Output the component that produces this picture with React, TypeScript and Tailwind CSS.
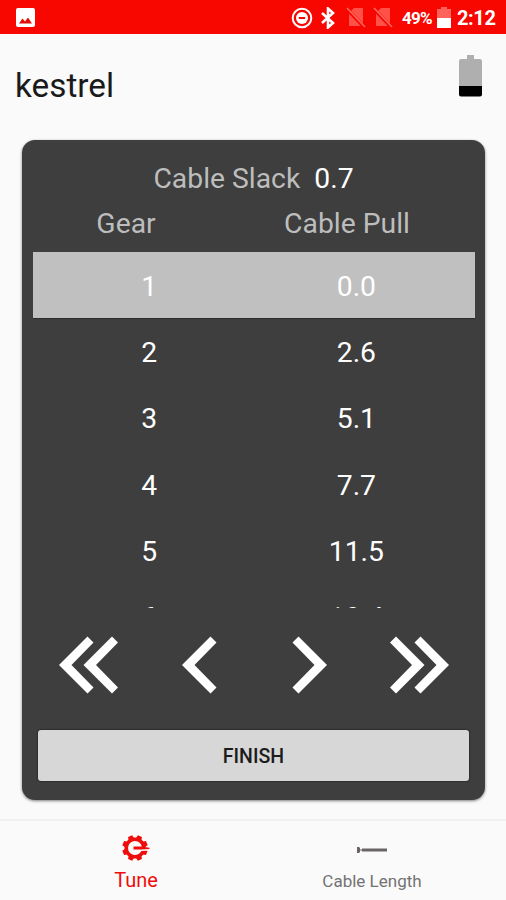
import { useState } from "react";

interface GearRow {
  gear: number;
  pull: string;
}

const ROWS: GearRow[] = [
  { gear: 1, pull: "0.0" },
  { gear: 2, pull: "2.6" },
  { gear: 3, pull: "5.1" },
  { gear: 4, pull: "7.7" },
  { gear: 5, pull: "11.5" },
  { gear: 6, pull: "18.4" },
];

// Teeth of the tune icon, in degrees
const TEETH = [22.5, 67.5, 112.5, 157.5, 202.5, 247.5, 292.5, 337.5];

function NoSimIcon() {
  return (
    <svg className="h-[22px] w-5" viewBox="0 0 20 22">
      <path d="M8 1h9v18H3V6z" fill="#ff5148" />
      <path d="M0 1l19 20" stroke="#f80600" strokeWidth="3.5" />
      <path d="M1 1l18 19" stroke="#ff6a60" strokeWidth="1.5" />
    </svg>
  );
}

function StatusBar() {
  return (
    <div className="flex h-[34px] items-center bg-[#f80600] pt-[2px] pl-4 text-white">
      <svg className="mb-[2px] h-[19px] w-[19px]" viewBox="0 0 19 19">
        <rect width="19" height="19" rx="2" fill="#fff" />
        <path d="M3 15.500l3.500-5 2.500 3L12 9.500l4 6z" fill="#e30b05" />
      </svg>

      <svg className="ml-[256px] h-[22px] w-[22px]" viewBox="0 0 22 22">
        <circle cx="11" cy="11" r="9.3" fill="none" stroke="#fff" strokeWidth="2" />
        <circle cx="11" cy="11" r="6" fill="#fff" />
        <path d="M7.8 11h6.4" stroke="#f80600" strokeWidth="2" />
      </svg>
      <svg className="ml-[7px] h-[22px] w-4" viewBox="0 0 16 22">
        <path
          d="M2 6l11 10-5 4.500v-19L13 6 2 16"
          fill="none"
          stroke="#fff"
          strokeWidth="2.600"
        />
      </svg>
      <div className="ml-[10px] flex gap-[7px]">
        <NoSimIcon />
        <NoSimIcon />
      </div>
      <span className="ml-[9px] w-[33px] text-[17px] leading-none font-bold tracking-[-0.7px] whitespace-nowrap">
        49%
      </span>
      <svg className="ml-[2px] h-[22px] w-[14px]" viewBox="0 0 14 22">
        <path d="M4 0h6v2h4v9H0V2h4z" fill="#ff625a" />
        <path d="M0 11h14v10H0z" fill="#fff" />
      </svg>
      <span className="ml-[6px] text-[20px] leading-none font-bold tracking-[-0.4px]">
        2:12
      </span>
    </div>
  );
}

interface ChevronProps {
  label: string;
  double?: boolean;
  flip?: boolean;
}

function ChevronButton({ label, double, flip }: ChevronProps) {
  const w = double ? 59 : 35;
  return (
    <button aria-label={label} className={flip ? "-scale-x-100" : ""}>
      <svg width={w} height={58} viewBox={`0 0 ${w} 58`} fill="#fff">
        <path d="M0 29L28.500.5l6 6L12.500 29l22 22.500-6 6z" />
        {double && <path d="M24.500 29L53 .5l6 6L37 29l22 22.500-6 6z" />}
      </svg>
    </button>
  );
}

function TuneIcon() {
  return (
    <svg className="h-[26px] w-[28px]" viewBox="-13 -13 28 26">
      {TEETH.map((deg) => (
        <path
          key={deg}
          d="M-3.200-8.500L-2.200-12.800h4.400L3.200-8.500z"
          transform={`rotate(${deg})`}
          fill="#f00c0c"
        />
      ))}
      <circle r="8.800" fill="none" stroke="#f00c0c" strokeWidth="3.600" />
      <path d="M5 1.200L13 .8v2L6 3z" fill="#fafafa" />
      <path d="M-1.500-1.500H6L14.500-.3v1.200L6 1.500h-7.500z" fill="#f00c0c" />
    </svg>
  );
}

export default function App() {
  const [selected, setSelected] = useState(1);

  return (
    <div className="flex h-[900px] w-[506px] flex-col overflow-hidden bg-[#fafafa] font-[Roboto,sans-serif]">
      <StatusBar />

      <header className="flex h-[106px] shrink-0 items-start justify-between pr-6 pl-[15px]">
        <h1 className="mt-8 text-[33.300px] leading-[40px] text-[#1a1a1a]">kestrel</h1>
        <svg className="mt-[21px] h-[42px] w-[23px]" viewBox="0 0 23 42">
          <path d="M8 0h7v4h6a2 2 0 0 1 2 2v26H0V6a2 2 0 0 1 2-2h6z" fill="#afafaf" />
          <path d="M0 31h23v8.500a2 2 0 0 1-2 2H2a2 2 0 0 1-2-2z" fill="#000" />
        </svg>
      </header>

      <main className="ml-[22px] flex h-[660px] w-[463px] shrink-0 flex-col rounded-[13px] bg-[#3e3e3e] shadow-[0_1px_3px_rgba(0,0,0,0.5)]">
        <div className="flex h-[61px] items-end justify-center pb-[4px] text-[28.300px] leading-[36px] text-[#bdbdbd]">
          Cable Slack
          <span className="ml-[14px] text-white">0.7</span>
        </div>
        <div className="flex h-[51px] pt-[5px] text-[28.300px] leading-[36px] text-[#bdbdbd]">
          <span className="w-[208px] text-center">Gear</span>
          <span className="w-[234px] text-center">Cable Pull</span>
        </div>

        <div className="mr-[10px] ml-[10.500px] h-[356px] overflow-hidden">
          {ROWS.map((row) => (
            <div
              key={row.gear}
              onClick={() => setSelected(row.gear)}
              className={`flex h-[66.200px] items-center pt-[4px] pr-[15px] pl-[13px] text-[28.300px] leading-[36px] text-white ${
                row.gear === selected ? "bg-[#c0c0c0] shadow-[0_0_0_1px_#2c2c2c]" : ""
              }`}
            >
              <span className="flex-1 text-center">{row.gear}</span>
              <span className="flex-1 text-center">{row.pull}</span>
            </div>
          ))}
        </div>

        <div className="mt-[28px] mr-[36px] ml-[37px] flex h-[58px] justify-between">
          <ChevronButton label="Back fast" double />
          <div className="flex gap-[75px]">
            <ChevronButton label="Back" />
            <ChevronButton label="Forward" flip />
          </div>
          <ChevronButton label="Forward fast" double flip />
        </div>

        <button className="mx-4 mt-9 h-[51px] rounded-[3px] bg-[#d6d7d6] pt-[2px] text-[19.500px] font-medium text-[#1c1c1c] shadow-[0_0_2px_rgba(0,0,0,0.8)]">
          FINISH
        </button>
      </main>

      <nav className="mt-[19px] flex flex-1 border-t-2 border-[#f1f1f1] pr-4 pl-[18px]">
        <button className="flex flex-1 flex-col items-center pt-[14px] text-[20px] leading-[24px] text-[#f00c0c]">
          <TuneIcon />
          <span className="mt-[7px]">Tune</span>
        </button>
        <button className="flex flex-1 flex-col items-center pt-[15px] text-[17px] leading-[24px] text-[#737373]">
          <svg className="h-[26px] w-[30px]" viewBox="0 0 30 26" fill="#686464">
            <path d="M0 11h2l1 1v4l-1 1H0zM3 13.500h2v1H3zM5 12.500h25v3H5z" />
          </svg>
          <span className="mt-[7px]">Cable Length</span>
        </button>
      </nav>
    </div>
  );
}
